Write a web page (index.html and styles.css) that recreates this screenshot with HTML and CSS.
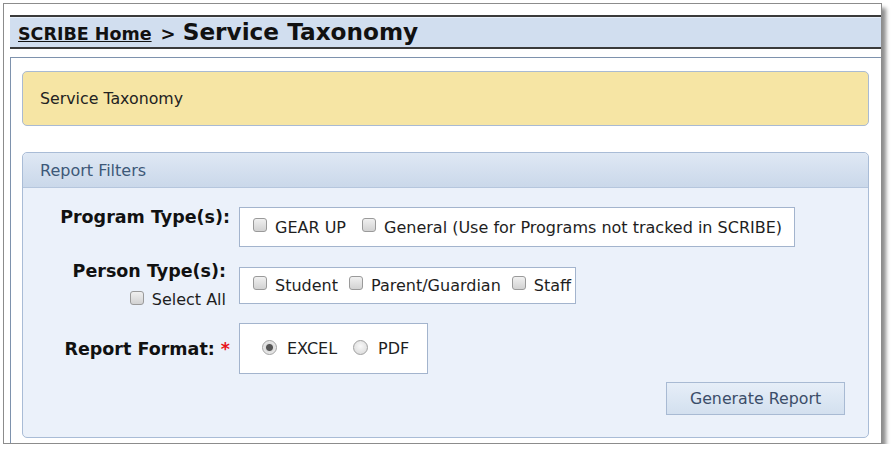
FILE: index.html
```html
<!DOCTYPE html>
<html>
<head>
<meta charset="utf-8">
<link rel="stylesheet" href="styles.css">
</head>
<body>
<div class="frame">
  <div class="titlebar">
    <a class="home" href="#">SCRIBE Home</a><span class="sep">&gt;</span><span class="title">Service Taxonomy</span>
  </div>
  <div class="content">
    <div class="notice">Service Taxonomy</div>
    <div class="panel">
      <div class="panel-head">Report Filters</div>
      <div class="panel-body">
        <div class="form">
          <div class="label label-program">Program Type(s):</div>
          <div class="opts opts-program">
            <label class="opt"><input type="checkbox" class="cb">GEAR UP</label>
            <label class="opt"><input type="checkbox" class="cb">General (Use for Programs not tracked in SCRIBE)</label>
          </div>
          <div class="label label-person">
            <div>Person Type(s):</div>
            <label class="selall"><input type="checkbox" class="cb">Select All</label>
          </div>
          <div class="opts opts-person">
            <label class="opt"><input type="checkbox" class="cb">Student</label>
            <label class="opt"><input type="checkbox" class="cb">Parent/Guardian</label>
            <label class="opt"><input type="checkbox" class="cb">Staff</label>
          </div>
          <div class="label label-format">Report Format: <span class="req">*</span></div>
          <div class="opts opts-format">
            <label class="opt"><input type="radio" name="fmt" class="rb" checked>EXCEL</label>
            <label class="opt"><input type="radio" name="fmt" class="rb">PDF</label>
          </div>
        </div>
        <div class="actions">
          <button class="btn" type="button">Generate Report</button>
        </div>
      </div>
    </div>
  </div>
</div>
</body>
</html>
```

FILE: styles.css
```css
html, body {
  margin: 0;
  padding: 0;
  background: #ffffff;
}
body {
  font-family: "DejaVu Sans", Verdana, sans-serif;
  color: #1a1a1a;
}
.frame {
  box-sizing: border-box;
  margin: 3px 0 0 3px;
  width: 879px;
  height: 441px;
  border: 1px solid #8c8c8c;
  box-shadow: 4px 5px 4px rgba(0, 0, 0, 0.45);
  padding: 11px 0 0 6px;
  overflow: hidden;
  background: #fff;
}
.titlebar {
  box-sizing: border-box;
  height: 34px;
  border-top: 2px solid #3a3a3a;
  border-bottom: 2px solid #3a3a3a;
  background: #d1deef;
  box-shadow: inset 0 1px 0 #e6eef8;
  display: flex;
  align-items: baseline;
  padding: 1px 0 0 8px;
  white-space: nowrap;
}
.home {
  font-weight: bold;
  font-size: 17.5px;
  color: #111;
  text-decoration: underline;
}
.sep {
  font-weight: bold;
  font-size: 18px;
  color: #111;
  margin: 0 7px 0 9px;
}
.title {
  font-weight: bold;
  font-size: 23.2px;
  color: #111;
}
.content {
  margin-top: 8px;
  border-top: 1px solid #7e92ad;
  border-left: 1px solid #7e92ad;
  height: 500px;
  padding: 13px 12px 0 11px;
}
.notice {
  height: 53px;
  border: 1px solid #a9bad3;
  border-radius: 5px;
  background: #f6e5a4;
  display: flex;
  align-items: center;
  padding-left: 17px;
  font-size: 15.8px;
  color: #222;
}
.panel {
  margin-top: 26px;
  border: 1px solid #a9bcd6;
  border-radius: 5px;
  background: #ebf1fa;
  height: 286px;
  box-sizing: border-box;
}
.panel-head {
  height: 34px;
  border-bottom: 1px solid #b5c6dd;
  border-radius: 5px 5px 0 0;
  background: linear-gradient(#dfe8f4, #cad8ea);
  display: flex;
  align-items: center;
  padding-left: 17px;
  font-size: 16px;
  color: #3d5878;
}
.panel-body {
  padding: 19px 23px 0 0;
}
.form {
  display: grid;
  grid-template-columns: 207px auto;
  column-gap: 9px;
  row-gap: 20px;
  justify-items: start;
}
.label {
  justify-self: end;
  text-align: right;
  font-weight: bold;
  font-size: 17.5px;
  color: #111;
  line-height: 20px;
}
.label-person {
  margin: -6px 4px -10px 0;
}
.label-format {
  align-self: center;
}
.req {
  color: #e8141a;
  font-weight: bold;
}
.opts {
  background: #fff;
  border: 1px solid #a3b4cd;
  display: flex;
  align-items: center;
  box-sizing: border-box;
  font-size: 16px;
  color: #1e1e1e;
}
.opts-program {
  height: 40px;
  padding: 0 12px 0 13px;
  gap: 16px;
}
.opts-person {
  height: 37px;
  padding: 0 4px 0 13px;
  gap: 11px;
}
.opts-format {
  height: 51px;
  padding: 0 18px 0 22px;
  gap: 16px;
  margin-top: -1px;
}
.opt {
  display: flex;
  align-items: center;
  white-space: nowrap;
}
.selall {
  display: flex;
  align-items: center;
  justify-content: flex-end;
  font-weight: normal;
  font-size: 16px;
  color: #1e1e1e;
  margin-top: 9px;
}
.cb {
  -webkit-appearance: none;
  appearance: none;
  width: 14px;
  height: 14px;
  margin: 0 8px 5px 0;
  border: 1px solid #9a9a9a;
  border-radius: 3px;
  background: linear-gradient(#f0f0f0, #d2d2d2);
  box-sizing: border-box;
}
.rb {
  -webkit-appearance: none;
  appearance: none;
  width: 15px;
  height: 15px;
  margin: 0 10px 2px 0;
  border: 1px solid #a0a0a0;
  border-radius: 50%;
  background: radial-gradient(circle at 50% 40%, #f8f8f8, #d6d6d6);
  box-sizing: border-box;
}
.rb:checked {
  background: radial-gradient(circle, #555 0, #555 3px, #dcdcdc 4px, #ececec 7px);
}
.actions {
  display: flex;
  justify-content: flex-end;
  margin-top: 8px;
}
.btn {
  width: 179px;
  height: 33px;
  border: 1px solid #a8bad3;
  background: linear-gradient(#e6eef8, #d3e0ef);
  font-family: "DejaVu Sans", Verdana, sans-serif;
  font-size: 15.8px;
  color: #3b4d69;
  cursor: pointer;
}
```
